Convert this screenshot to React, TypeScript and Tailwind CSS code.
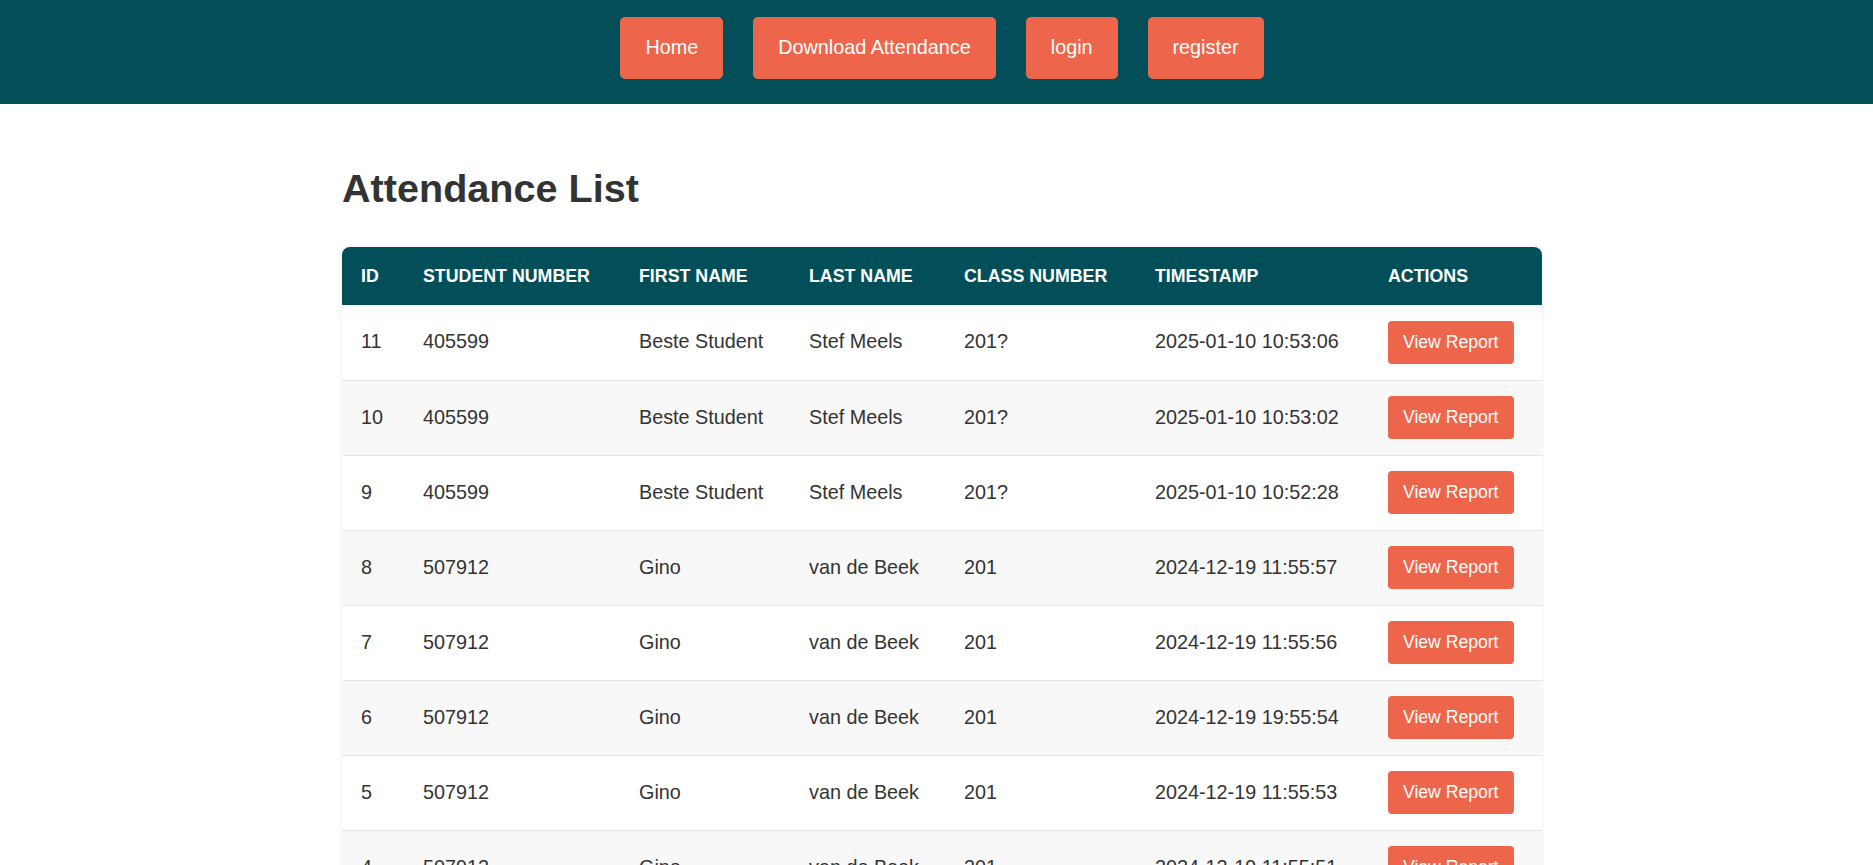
const navLinks = ["Home", "Download Attendance", "login", "register"];

const rows = [
  { id: 11, student: "405599", first: "Beste Student", last: "Stef Meels", cls: "201?", ts: "2025-01-10 10:53:06" },
  { id: 10, student: "405599", first: "Beste Student", last: "Stef Meels", cls: "201?", ts: "2025-01-10 10:53:02" },
  { id: 9, student: "405599", first: "Beste Student", last: "Stef Meels", cls: "201?", ts: "2025-01-10 10:52:28" },
  { id: 8, student: "507912", first: "Gino", last: "van de Beek", cls: "201", ts: "2024-12-19 11:55:57" },
  { id: 7, student: "507912", first: "Gino", last: "van de Beek", cls: "201", ts: "2024-12-19 11:55:56" },
  { id: 6, student: "507912", first: "Gino", last: "van de Beek", cls: "201", ts: "2024-12-19 19:55:54" },
  { id: 5, student: "507912", first: "Gino", last: "van de Beek", cls: "201", ts: "2024-12-19 11:55:53" },
  { id: 4, student: "507912", first: "Gino", last: "van de Beek", cls: "201", ts: "2024-12-19 11:55:51" },
  { id: 3, student: "507912", first: "Gino", last: "van de Beek", cls: "201", ts: "2024-12-19 11:55:49" },
  { id: 2, student: "507912", first: "Gino", last: "van de Beek", cls: "201", ts: "2024-12-19 11:55:47" },
  { id: 1, student: "507912", first: "Gino", last: "van de Beek", cls: "201", ts: "2024-12-19 11:55:45" },
];

const columns = [
  { label: "ID", w: "w-[62px]" },
  { label: "Student Number", w: "w-[216px]" },
  { label: "First Name", w: "w-[170px]" },
  { label: "Last Name", w: "w-[155px]" },
  { label: "Class Number", w: "w-[191px]" },
  { label: "Timestamp", w: "w-[233px]" },
  { label: "Actions", w: "w-[173px]" },
];

const App = () => {
  return (
    <div className="min-h-screen bg-white text-[#333] font-['Liberation_Sans',Arial,sans-serif]">
      {/* Top bar */}
      <header className="h-[104px] bg-[#024f59] pt-[17px] pl-[11px]">
        <nav className="flex justify-center gap-[30px]">
          {navLinks.map((l) => (
            <a
              key={l}
              href="#"
              className="h-[62px] px-[25px] flex items-center rounded-[5px] bg-[#ed664c] text-white text-[19.8px]"
            >
              {l}
            </a>
          ))}
        </nav>
      </header>

      <main className="flex justify-center pl-[11px] pt-[61px]">
        <div className="w-[1200px]">
          <h1 className="text-[39.6px] leading-[46px] font-bold text-[#333] mb-[36px]">Attendance List</h1>

          <div className="rounded-[8px] overflow-hidden shadow-[0_0_4px_rgba(0,0,0,0.08)]">
            <table className="w-full table-fixed border-collapse">
              <colgroup>
                {columns.map((c) => (
                  <col key={c.label} className={c.w} />
                ))}
              </colgroup>
              <thead>
                <tr className="h-[58px] bg-[#024f59] text-white">
                  {columns.map((c) => (
                    <th key={c.label} className="pl-[19px] text-left text-[17.8px] font-bold uppercase">
                      {c.label}
                    </th>
                  ))}
                </tr>
              </thead>
              <tbody className="text-[19.8px]">
                {rows.map((r, i) => (
                  <tr key={r.id} className={`h-[75px] border-b border-[#e5e5e5] ${i % 2 === 1 ? "bg-[#f8f8f8]" : "bg-white"}`}>
                    <td className="pl-[19px]">{r.id}</td>
                    <td className="pl-[19px]">{r.student}</td>
                    <td className="pl-[19px]">{r.first}</td>
                    <td className="pl-[19px]">{r.last}</td>
                    <td className="pl-[19px]">{r.cls}</td>
                    <td className="pl-[19px]">{r.ts}</td>
                    <td className="pl-[19px]">
                      <button
                        type="button"
                        className="h-[43px] px-[15px] rounded-[4px] bg-[#ed664c] text-white text-[17.6px]"
                      >
                        View Report
                      </button>
                    </td>
                  </tr>
                ))}
              </tbody>
            </table>
          </div>
        </div>
      </main>
    </div>
  );
};

export default App;
